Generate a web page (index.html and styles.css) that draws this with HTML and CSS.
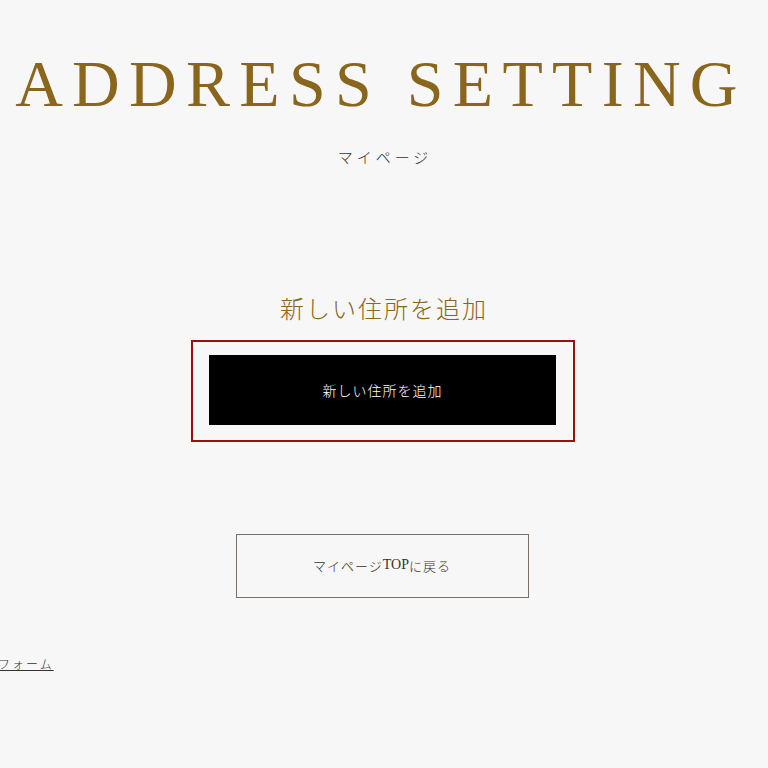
FILE: index.html
```html
<!DOCTYPE html>
<html lang="ja">
<head>
<meta charset="utf-8">
<title>ADDRESS SETTING</title>
<link rel="stylesheet" href="styles.css">
</head>
<body>
<main class="page">
  <header class="page-head">
    <h1 class="title">ADDRESS SETTING</h1>
    <p class="subtitle">マイページ</p>
  </header>
  <section class="add-section">
    <h2 class="section-title">新しい住所を追加</h2>
    <div class="focus-box">
      <a class="btn-add" href="#">新しい住所を追加</a>
    </div>
  </section>
  <div class="back-wrap">
    <a class="btn-back" href="#">マイページ<span class="latin">TOP</span>に戻る</a>
  </div>
  <div class="foot-link-wrap">
    <a class="foot-link" href="#">お問い合わせフォーム</a>
  </div>
</main>
</body>
</html>
```
FILE: styles.css
```css
* { box-sizing: border-box; }
html, body {
  margin: 0;
  padding: 0;
  background: #f7f7f7;
}
body {
  font-family: "Noto Sans CJK JP", "Liberation Serif", serif;
  color: #333;
  width: 768px;
  height: 768px;
  overflow: hidden;
}
.page {
  display: flex;
  flex-direction: column;
  align-items: center;
}
.page-head {
  padding-top: 51px;
  display: flex;
  flex-direction: column;
  align-items: center;
}
.title {
  margin: 0 6px 0 0;
  font-family: "Liberation Serif", serif;
  font-weight: normal;
  font-size: 66px;
  line-height: 66px;
  letter-spacing: 9.3px;
  color: #8a661c;
  white-space: nowrap;
}
.subtitle {
  margin: 30px 0 0;
  font-size: 15px;
  line-height: 20px;
  letter-spacing: 4px;
  padding-left: 2px;
  color: #333;
  font-weight: 300;
}
.add-section {
  margin-top: 125px;
  display: flex;
  flex-direction: column;
  align-items: center;
}
.section-title {
  margin: 0;
  font-size: 24px;
  line-height: 32px;
  font-weight: 300;
  letter-spacing: 2px;
  color: #8a661c;
}
.focus-box {
  margin-top: 16px;
  margin-right: 2px;
  width: 384px;
  height: 102px;
  border: 2px solid #a00d0d;
  padding: 13px 17px 15px 16px;
}
.btn-add {
  display: flex;
  align-items: center;
  justify-content: center;
  width: 100%;
  height: 100%;
  background: #000;
  color: #fff;
  font-size: 14px;
  letter-spacing: 1px;
  text-decoration: none;
  font-weight: 300;
}
.back-wrap {
  margin-top: 92px;
  margin-right: 4px;
}
.btn-back {
  display: flex;
  align-items: center;
  justify-content: center;
  width: 293px;
  height: 64px;
  border: 1px solid #7d6e60;
  color: #333;
  font-size: 13px;
  letter-spacing: 1px;
  padding-bottom: 2px;
  text-decoration: none;
  font-weight: 300;
}
.latin {
  font-family: "Liberation Serif", serif;
  font-size: 14px;
  letter-spacing: 0;
}
.foot-link-wrap {
  align-self: flex-start;
  margin-top: 52px;
  margin-left: -86px;
}
.foot-link {
  font-size: 12px;
  line-height: 16px;
  letter-spacing: 2px;
  color: #333;
  text-decoration: underline;
  font-weight: 300;
}
```
